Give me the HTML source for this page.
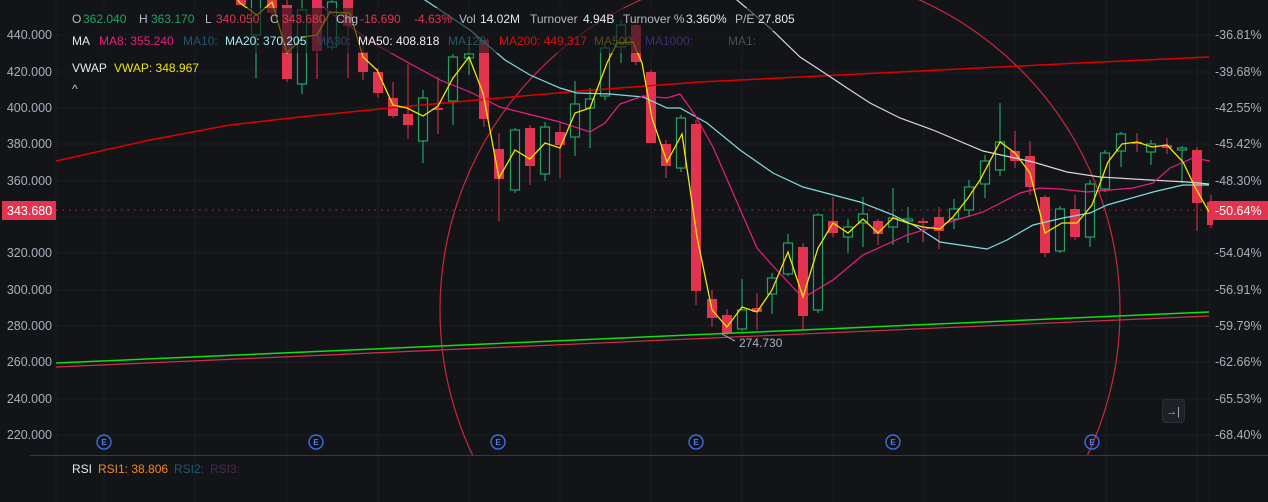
<!DOCTYPE html>
<html><head><meta charset="utf-8"><style>
*{margin:0;padding:0;box-sizing:border-box}
html,body{width:1268px;height:502px;overflow:hidden}
body{background:#121418;position:relative;font-family:"Liberation Sans",sans-serif;font-size:12px;color:#b4bac6}
.t{position:absolute;white-space:nowrap;line-height:14px;font-size:12px}
.ax{position:absolute;white-space:nowrap;font-size:12.5px;color:#a8b0bd;line-height:14px}
.g{color:#21a366}.r{color:#e2344f}.w{color:#e6e8ec}
</style></head><body>
<svg width="1268" height="502" style="position:absolute;left:0;top:0">
<defs><clipPath id="c"><rect x="56" y="0" width="1157" height="455"/></clipPath></defs>
<g stroke="#1b1e25" stroke-width="1">
<line x1="56" y1="35" x2="1210" y2="35"/><line x1="56" y1="72" x2="1210" y2="72"/><line x1="56" y1="108" x2="1210" y2="108"/><line x1="56" y1="144" x2="1210" y2="144"/><line x1="56" y1="181" x2="1210" y2="181"/><line x1="56" y1="217" x2="1210" y2="217"/><line x1="56" y1="253" x2="1210" y2="253"/><line x1="56" y1="290" x2="1210" y2="290"/><line x1="56" y1="326" x2="1210" y2="326"/><line x1="56" y1="362" x2="1210" y2="362"/><line x1="56" y1="399" x2="1210" y2="399"/><line x1="56" y1="435" x2="1210" y2="435"/>
<line x1="104" y1="0" x2="104" y2="502"/><line x1="195" y1="0" x2="195" y2="502"/><line x1="287" y1="0" x2="287" y2="502"/><line x1="378" y1="0" x2="378" y2="502"/><line x1="469" y1="0" x2="469" y2="502"/><line x1="560" y1="0" x2="560" y2="502"/><line x1="651" y1="0" x2="651" y2="502"/><line x1="742" y1="0" x2="742" y2="502"/><line x1="833" y1="0" x2="833" y2="502"/><line x1="924" y1="0" x2="924" y2="502"/><line x1="1015" y1="0" x2="1015" y2="502"/><line x1="1106" y1="0" x2="1106" y2="502"/><line x1="1197" y1="0" x2="1197" y2="502"/>
<line x1="56" y1="0" x2="56" y2="502"/><line x1="1209" y1="0" x2="1209" y2="502"/>
</g>
<line x1="30" y1="455.5" x2="1268" y2="455.5" stroke="#363a44" stroke-width="1"/>
<g clip-path="url(#c)">
<circle cx="780" cy="310" r="340" fill="none" stroke="#c8283c" stroke-width="1.2"/>
<line x1="56" y1="210" x2="1209" y2="210" stroke="#c8283c" stroke-width="1" stroke-dasharray="1.5 5"/>
<g stroke="#e2344f" stroke-width="1">
<line x1="241" y1="-5" x2="241" y2="5"/><line x1="272" y1="-5" x2="272" y2="20"/><line x1="287" y1="0" x2="287" y2="82"/><line x1="317" y1="-5" x2="317" y2="79"/><line x1="348" y1="-5" x2="348" y2="78"/><line x1="363" y1="45" x2="363" y2="80"/><line x1="378" y1="68" x2="378" y2="98"/><line x1="393" y1="82" x2="393" y2="118"/><line x1="408" y1="64" x2="408" y2="139"/><line x1="438" y1="77" x2="438" y2="134"/><line x1="484" y1="40" x2="484" y2="127"/><line x1="499" y1="133" x2="499" y2="221"/><line x1="530" y1="125" x2="530" y2="185"/><line x1="560" y1="122" x2="560" y2="178"/><line x1="636" y1="20" x2="636" y2="65"/><line x1="651" y1="70" x2="651" y2="143"/><line x1="666" y1="140" x2="666" y2="178"/><line x1="696" y1="120" x2="696" y2="305"/><line x1="712" y1="290" x2="712" y2="327"/><line x1="727" y1="309" x2="727" y2="335"/><line x1="757" y1="293" x2="757" y2="330"/><line x1="803" y1="243" x2="803" y2="330"/><line x1="833" y1="197" x2="833" y2="237"/><line x1="878" y1="219" x2="878" y2="245"/><line x1="923" y1="218" x2="923" y2="242"/><line x1="939" y1="207" x2="939" y2="249"/><line x1="1015" y1="131" x2="1015" y2="168"/><line x1="1030" y1="141" x2="1030" y2="195"/><line x1="1045" y1="195" x2="1045" y2="257"/><line x1="1075" y1="195" x2="1075" y2="240"/><line x1="1137" y1="133" x2="1137" y2="152"/><line x1="1167" y1="138" x2="1167" y2="154"/><line x1="1197" y1="147" x2="1197" y2="231"/><line x1="1211" y1="195" x2="1211" y2="228"/>
</g>
<g fill="#e2344f">
<rect x="236" y="-5" width="10" height="10"/><rect x="267" y="-5" width="10" height="18"/><rect x="282" y="5" width="10" height="74"/><rect x="312" y="-5" width="10" height="56"/><rect x="343" y="-5" width="10" height="31"/><rect x="358" y="52" width="10" height="20"/><rect x="373" y="72" width="10" height="21"/><rect x="388" y="98" width="10" height="18"/><rect x="403" y="114" width="10" height="11"/><rect x="433" y="108" width="10" height="2"/><rect x="479" y="40" width="10" height="79"/><rect x="494" y="149" width="10" height="30"/><rect x="525" y="128" width="10" height="38"/><rect x="555" y="132" width="10" height="13"/><rect x="631" y="25" width="10" height="37"/><rect x="646" y="72" width="10" height="71"/><rect x="661" y="144" width="10" height="22"/><rect x="691" y="124" width="10" height="167"/><rect x="707" y="299" width="10" height="19"/><rect x="722" y="315" width="10" height="18"/><rect x="752" y="308" width="10" height="4"/><rect x="798" y="247" width="10" height="69"/><rect x="828" y="221" width="10" height="12"/><rect x="873" y="221" width="10" height="13"/><rect x="918" y="221" width="10" height="2"/><rect x="934" y="217" width="10" height="14"/><rect x="1010" y="151" width="10" height="10"/><rect x="1025" y="156" width="10" height="31"/><rect x="1040" y="197" width="10" height="56"/><rect x="1070" y="209" width="10" height="28"/><rect x="1132" y="142" width="10" height="2"/><rect x="1162" y="145" width="10" height="3"/><rect x="1192" y="150" width="10" height="53"/><rect x="1207" y="202" width="10" height="23"/>
</g>
<g stroke="#22a363" stroke-width="1.2" fill="#121418">
<line x1="256" y1="0" x2="256" y2="78"/><line x1="302" y1="0" x2="302" y2="94"/><line x1="332" y1="0" x2="332" y2="50"/><line x1="423" y1="90" x2="423" y2="163"/><line x1="453" y1="54" x2="453" y2="125"/><line x1="469" y1="40" x2="469" y2="75"/><line x1="515" y1="128" x2="515" y2="193"/><line x1="545" y1="122" x2="545" y2="181"/><line x1="575" y1="81" x2="575" y2="156"/><line x1="590" y1="88" x2="590" y2="148"/><line x1="605" y1="45" x2="605" y2="100"/><line x1="621" y1="20" x2="621" y2="63"/><line x1="681" y1="115" x2="681" y2="172"/><line x1="742" y1="279" x2="742" y2="331"/><line x1="772" y1="273" x2="772" y2="314"/><line x1="788" y1="234" x2="788" y2="276"/><line x1="818" y1="213" x2="818" y2="313"/><line x1="848" y1="219" x2="848" y2="253"/><line x1="863" y1="197" x2="863" y2="247"/><line x1="893" y1="188" x2="893" y2="245"/><line x1="908" y1="207" x2="908" y2="243"/><line x1="954" y1="199" x2="954" y2="229"/><line x1="969" y1="180" x2="969" y2="217"/><line x1="985" y1="155" x2="985" y2="198"/><line x1="1000" y1="103" x2="1000" y2="176"/><line x1="1060" y1="206" x2="1060" y2="253"/><line x1="1090" y1="180" x2="1090" y2="247"/><line x1="1105" y1="150" x2="1105" y2="192"/><line x1="1121" y1="132" x2="1121" y2="167"/><line x1="1151" y1="140" x2="1151" y2="165"/><line x1="1182" y1="146" x2="1182" y2="183"/>
<rect x="251.5" y="-1" width="9" height="36"/><rect x="297.5" y="10" width="9" height="74"/><rect x="327.5" y="2" width="9" height="45"/><rect x="418.5" y="98" width="9" height="43"/><rect x="448.5" y="57" width="9" height="44"/><rect x="464.5" y="54" width="9" height="4"/><rect x="510.5" y="130" width="9" height="60"/><rect x="540.5" y="127" width="9" height="47"/><rect x="570.5" y="104" width="9" height="33"/><rect x="585.5" y="99" width="9" height="9"/><rect x="600.5" y="48" width="9" height="48"/><rect x="616.5" y="25" width="9" height="22"/><rect x="676.5" y="118" width="9" height="50"/><rect x="737.5" y="310" width="9" height="19"/><rect x="767.5" y="278" width="9" height="16"/><rect x="783.5" y="243" width="9" height="31"/><rect x="813.5" y="215" width="9" height="95"/><rect x="843.5" y="227" width="9" height="10"/><rect x="858.5" y="214" width="9" height="9"/><rect x="888.5" y="218" width="9" height="9"/><rect x="903.5" y="219" width="9" height="2"/><rect x="949.5" y="209" width="9" height="10"/><rect x="964.5" y="187" width="9" height="23"/><rect x="980.5" y="161" width="9" height="23"/><rect x="995.5" y="142" width="9" height="28"/><rect x="1055.5" y="209" width="9" height="42"/><rect x="1085.5" y="184" width="9" height="53"/><rect x="1100.5" y="153" width="9" height="36"/><rect x="1116.5" y="134" width="9" height="17"/><rect x="1146.5" y="144" width="9" height="8"/><rect x="1177.5" y="148" width="9" height="2"/>
</g>
<polyline fill="none" stroke="#e00000" stroke-width="1.5" points="56,161 150,140 230,125 300,117 400,107 500,98 580,91 700,82 900,72 1080,63 1209,57"/>
<line x1="56" y1="363" x2="1209" y2="312" stroke="#10e010" stroke-width="1.5"/>
<line x1="56" y1="367" x2="1209" y2="316" stroke="#c8304a" stroke-width="1.3"/>
<polyline fill="none" stroke="#d8d8d8" stroke-width="1.2" points="720,-10 737,0 770,28 800,57 823,72 847,88 870,103 900,118 933,130 983,151 1033,162 1067,172 1100,177 1150,180 1187,182 1209,184"/>
<polyline fill="none" stroke="#7fdde0" stroke-width="1.2" points="390,-20 425,0 470,30 505,60 530,75 560,88 577,93 610,94 643,97 667,108 680,108 707,123 740,150 773,173 803,187 860,202 893,215 917,227 940,242 960,245 987,249 1007,240 1033,225 1063,218 1090,213 1107,205 1153,192 1183,185 1209,185"/>
<polyline fill="none" stroke="#e8207f" stroke-width="1.2" points="300,-10 313,0 373,43 407,62 440,80 470,92 500,107 560,122 590,132 605,123 620,104 643,96 667,98 680,94 695,115 713,147 757,248 773,266 803,298 833,280 863,255 907,235 943,224 983,212 1020,193 1040,188 1060,189 1087,192 1133,188 1153,183 1170,168 1193,158 1210,161"/>
<polyline fill="none" stroke="#f2e600" stroke-width="1.3" points="236,-3 240,3 257,15 272,2 287,53 303,37 317,35 330,12 350,13 363,57 377,70 393,105 407,108 423,116 438,106 453,78 469,57 483,93 499,178 515,150 530,159 545,143 560,148 575,113 590,108 607,63 617,43 633,42 642,63 652,118 667,162 682,134 697,237 712,310 727,327 742,307 757,312 772,290 788,252 803,297 818,248 833,223 848,233 863,219 878,233 893,218 908,223 923,227 940,229 953,217 968,198 980,180 1000,142 1015,153 1030,173 1045,233 1062,223 1077,223 1092,205 1108,162 1122,144 1137,142 1152,147 1167,145 1183,162 1195,187 1209,212"/>
</g>
<line x1="722" y1="334" x2="735" y2="341" stroke="#9aa2ae" stroke-width="1"/>
<g fill="#121418" fill-opacity="0.6">
<rect x="66" y="8" width="740" height="23"/><rect x="66" y="31" width="700" height="22"/><rect x="66" y="57" width="106" height="22"/>
</g>
<g fill="none" stroke="#3d6de0" stroke-width="1.4">
<circle cx="104" cy="442" r="7"/><circle cx="316" cy="442" r="7"/><circle cx="498" cy="442" r="7"/><circle cx="696" cy="442" r="7"/><circle cx="893" cy="442" r="7"/><circle cx="1092" cy="442" r="7"/>
</g>
<g fill="#4f7ff0" font-family="Liberation Sans,sans-serif" font-size="8" font-weight="bold" text-anchor="middle">
<text x="104" y="445">E</text><text x="316" y="445">E</text><text x="498" y="445">E</text><text x="696" y="445">E</text><text x="893" y="445">E</text><text x="1092" y="445">E</text>
</g>
<rect x="1162.5" y="399.5" width="22" height="23" rx="3" fill="#1e2128" stroke="#2a2e37"/>
<text x="1173" y="415" fill="#a8b0bd" font-family="Liberation Sans,sans-serif" font-size="11" text-anchor="middle">→|</text>
<rect x="2" y="201" width="54" height="19" fill="#e2344f"/>
<rect x="1209" y="201" width="59" height="19" fill="#e2344f"/>
</svg>
<div class="t" style="left:72px;top:12px">O</div><div class="t g" style="left:83px;top:12px">362.040</div>
<div class="t" style="left:139px;top:12px">H</div><div class="t g" style="left:151px;top:12px">363.170</div>
<div class="t" style="left:205px;top:12px">L</div><div class="t r" style="left:216px;top:12px">340.050</div>
<div class="t" style="left:270px;top:12px">C</div><div class="t r" style="left:282px;top:12px">343.680</div>
<div class="t" style="left:336px;top:12px">Chg</div><div class="t r" style="left:360px;top:12px">-16.690</div>
<div class="t r" style="left:414px;top:12px">-4.63%</div>
<div class="t" style="left:459px;top:12px">Vol</div><div class="t w" style="left:480px;top:12px">14.02M</div>
<div class="t" style="left:530px;top:12px">Turnover</div><div class="t w" style="left:583px;top:12px">4.94B</div>
<div class="t" style="left:623px;top:12px">Turnover %</div><div class="t w" style="left:686px;top:12px">3.360%</div>
<div class="t" style="left:735px;top:12px">P/E</div><div class="t w" style="left:758px;top:12px">27.805</div>
<div class="t" style="left:72px;top:34px;color:#e6e8ec">MA</div>
<div class="t" style="left:99px;top:34px;color:#e8207f">MA8: 355.240</div>
<div class="t" style="left:183px;top:34px;color:#1f5870">MA10:</div>
<div class="t" style="left:225px;top:34px;color:#a6ecf4">MA20: 370.205</div>
<div class="t" style="left:316px;top:34px;color:#2a4672">MA30:</div>
<div class="t" style="left:358px;top:34px;color:#f0f0f0">MA50: 408.818</div>
<div class="t" style="left:448px;top:34px;color:#245a68">MA120:</div>
<div class="t" style="left:499px;top:34px;color:#e01010">MA200: 449.317</div>
<div class="t" style="left:594px;top:34px;color:#5a4d1f">MA500:</div>
<div class="t" style="left:645px;top:34px;color:#3c2e74">MA1000:</div>
<div class="t" style="left:728px;top:34px;color:#4a4d54">MA1:</div>
<div class="t" style="left:72px;top:61px;color:#e6e8ec">VWAP</div>
<div class="t" style="left:114px;top:61px;color:#f2e600">VWAP: 348.967</div>
<div class="t" style="left:72px;top:82px;color:#c8ccd4">^</div>
<div class="t" style="left:739px;top:336px;color:#a8b0bd">274.730</div>
<div class="t" style="left:72px;top:462px;color:#e6e8ec">RSI</div>
<div class="t" style="left:98px;top:462px;color:#f08a20">RSI1: 38.806</div>
<div class="t" style="left:174px;top:462px;color:#1f5870">RSI2:</div>
<div class="t" style="left:210px;top:462px;color:#4a2a52">RSI3:</div>
<div class="ax" style="right:1216px;top:28px">440.000</div>
<div class="ax" style="right:1216px;top:65px">420.000</div>
<div class="ax" style="right:1216px;top:101px">400.000</div>
<div class="ax" style="right:1216px;top:137px">380.000</div>
<div class="ax" style="right:1216px;top:174px">360.000</div>
<div class="ax" style="right:1216px;top:246px">320.000</div>
<div class="ax" style="right:1216px;top:283px">300.000</div>
<div class="ax" style="right:1216px;top:319px">280.000</div>
<div class="ax" style="right:1216px;top:355px">260.000</div>
<div class="ax" style="right:1216px;top:392px">240.000</div>
<div class="ax" style="right:1216px;top:428px">220.000</div>
<div class="ax" style="left:7px;top:204px;color:#fff">343.680</div>
<div class="ax" style="left:1215px;top:28px">-36.81%</div>
<div class="ax" style="left:1215px;top:65px">-39.68%</div>
<div class="ax" style="left:1215px;top:101px">-42.55%</div>
<div class="ax" style="left:1215px;top:137px">-45.42%</div>
<div class="ax" style="left:1215px;top:174px">-48.30%</div>
<div class="ax" style="left:1215px;top:204px;color:#fff">-50.64%</div>
<div class="ax" style="left:1215px;top:246px">-54.04%</div>
<div class="ax" style="left:1215px;top:283px">-56.91%</div>
<div class="ax" style="left:1215px;top:319px">-59.79%</div>
<div class="ax" style="left:1215px;top:355px">-62.66%</div>
<div class="ax" style="left:1215px;top:392px">-65.53%</div>
<div class="ax" style="left:1215px;top:428px">-68.40%</div>
</body></html>
